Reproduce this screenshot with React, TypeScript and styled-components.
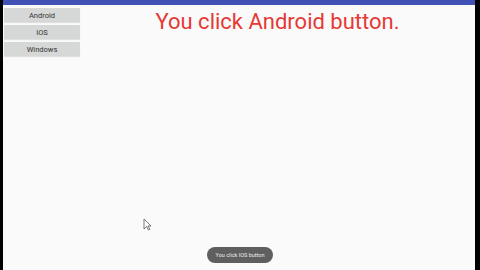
import React from "react";
import styled, {createGlobalStyle} from "styled-components";

const GlobalStyle = createGlobalStyle`
  html, body {
    margin: 0;
    padding: 0;
    width: 480px;
    height: 270px;
    overflow: hidden;
    background: #000;
  }
  * { box-sizing: border-box; }
`;

const Screen = styled.div`
  position: relative;
  display: flex;
  width: 480px;
  height: 270px;
  background: #000;
  font-family: Roboto, "Noto Sans", sans-serif;
`;

const Device = styled.div`
  flex: 1;
  margin: 0 5px 0 3px;
  display: flex;
  flex-direction: column;
  background: #fafafa;
`;

const StatusBar = styled.div`
  height: 5px;
  background: #3f51b5;
`;

const Content = styled.div`
  flex: 1;
  display: flex;
  padding: 3px 0 0 1px;
`;

const ButtonColumn = styled.div`
  width: 76px;
  display: flex;
  flex-direction: column;
  gap: 3px;
`;

const PlatformButton = styled.button`
  height: 14px;
  border: none;
  border-radius: 1px;
  background: #d6d7d7;
  color: #333;
  font-family: Roboto, "Noto Sans", sans-serif;
  font-size: 7.5px;
  padding: 0;
  box-shadow: 0 1px 1px rgba(0, 0, 0, 0.12);
`;

const MessageArea = styled.div`
  flex: 1;
  display: flex;
  justify-content: center;
  padding-top: 2px;
`;

const Message = styled.div`
  color: #e53935;
  font-size: 22px;
  line-height: 24px;
  height: 24px;
`;

const Toast = styled.div`
  position: absolute;
  left: 207px;
  top: 247px;
  width: 66px;
  height: 16px;
  border-radius: 8px;
  background: #5f5f5f;
  color: #eee;
  font-size: 5.5px;
  display: flex;
  align-items: center;
  justify-content: center;
  white-space: nowrap;
`;

const Cursor = styled.svg`
  position: absolute;
  left: 143px;
  top: 218px;
`;

const platforms = ["Android", "IOS", "Windows"];

const App = () => {
    return <Screen>
        <GlobalStyle/>
        <Device>
            <StatusBar/>
            <Content>
                <ButtonColumn>
                    {platforms.map((p) => <PlatformButton key={p}>{p}</PlatformButton>)}
                </ButtonColumn>
                <MessageArea>
                    <Message>You click Android button.</Message>
                </MessageArea>
            </Content>
        </Device>
        <Toast>You click IOS button</Toast>
        <Cursor width="9" height="13" viewBox="0 0 9 13">
            <path d="M1 1 L1 11 L3.5 8.5 L5.5 12 L6.8 11.3 L5 8 L8 8 Z" fill="#fff" stroke="#555" strokeWidth="0.8" strokeLinejoin="round"/>
        </Cursor>
    </Screen>;
};

export default App;
